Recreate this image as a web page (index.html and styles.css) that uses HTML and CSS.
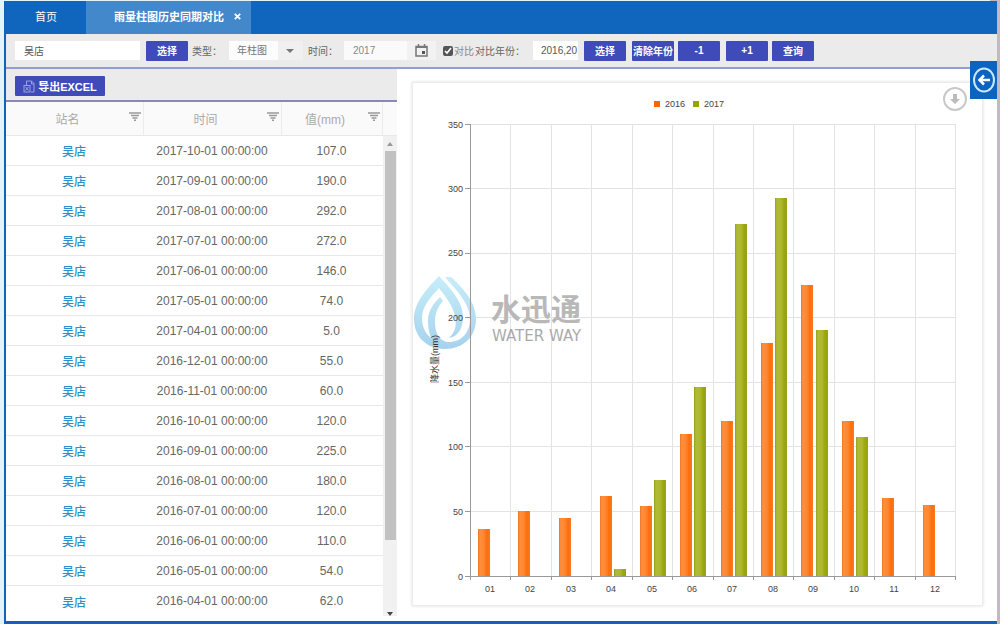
FILE: index.html
```html
<!DOCTYPE html>
<html lang="zh-CN">
<head>
<meta charset="utf-8">
<title>雨量柱图历史同期对比</title>
<link rel="stylesheet" href="styles.css">
</head>
<body>
<div class="app">
  <nav class="tabs">
    <a class="tab" href="#home">首页</a>
    <div class="tab tab-active"><a href="#rain">雨量柱图历史同期对比</a><button class="tab-close" aria-label="关闭"><svg width="7" height="7" viewBox="0 0 7 7"><path d="M.8.8l5.4 5.4M6.2.8L.8 6.2" stroke="#fff" stroke-width="1.8"/></svg></button></div>
  </nav>
  <form class="toolbar">
    <input class="field station" type="text" value="吴店" aria-label="站名">
    <button class="btn" type="button">选择</button>
    <label class="lbl lbl-type" for="type">类型：</label>
    <span class="select-wrap"><select class="type" id="type"><option>年柱图</option></select><svg class="caret" width="8" height="4" viewBox="0 0 8 4"><path d="M0 0h8L4 4z" fill="#777"/></svg></span>
    <label class="lbl lbl-time" for="time">时间：</label>
    <span class="date"><input class="field date-input" id="time" type="text" value="2017"><button class="date-btn" type="button" aria-label="选择日期"><svg width="13" height="13" viewBox="0 0 13 13"><path d="M1 2.500h11v9.500H1zM1 3.300h11M3.500 0v3M9.500 0v3" fill="none" stroke="#777" stroke-width="1.500"/><path d="M7 7h3v3H7z" fill="#555"/></svg></button></span>
    <label class="check"><input type="checkbox" checked>对比</label>
    <label class="lbl lbl-years" for="years">对比年份：</label>
    <input class="field years" id="years" type="text" value="2016,2017">
    <button class="btn" type="button">选择</button>
    <button class="btn" type="button">清除年份</button>
    <button class="btn btn-near" type="button">-1</button>
    <button class="btn" type="button">+1</button>
    <button class="btn btn-near" type="button">查询</button>
  </form>
  <main class="main">
    <section class="list">
      <div class="list-tools"><button class="btn export"><svg width="12" height="13" viewBox="0 0 12 13" fill="none" stroke="#9aa3df"><path d="M3.500 5V1h5L11 3.500V12H8M8.500 1v3H11"/><rect x="1" y="5.500" width="6" height="6.500"/><path d="M2.500 7l3 3.500M5.500 7l-3 3.500"/></svg>导出EXCEL</button></div>
      <div class="list-body">
        <table class="grid">
          <colgroup><col class="c-name"><col class="c-time"><col class="c-val"><col class="c-end"></colgroup>
          <thead><tr>
            <th><div class="head"><span>站名</span><svg class="filter" width="12" height="9" viewBox="0 0 12 9"><path d="M0 1h12M2 3.500h8M3.500 6h5M5 8.200h2" stroke="#999" stroke-width="1.500"/></svg></div></th>
            <th><div class="head"><span>时间</span><svg class="filter" width="12" height="9" viewBox="0 0 12 9"><path d="M0 1h12M2 3.500h8M3.500 6h5M5 8.200h2" stroke="#999" stroke-width="1.500"/></svg></div></th>
            <th><div class="head"><span>值(mm)</span><svg class="filter" width="12" height="9" viewBox="0 0 12 9"><path d="M0 1h12M2 3.500h8M3.500 6h5M5 8.200h2" stroke="#999" stroke-width="1.500"/></svg></div></th>
            <th></th>
          </tr></thead>
          <tbody>
            <tr><td><a href="#s">吴店</a></td><td>2017-10-01 00:00:00</td><td>107.0</td>
              <td class="scroll-cell" rowspan="16"><div class="scroll"><svg width="6" height="4" viewBox="0 0 6 4"><path d="M0 4h6L3 0z" fill="#999"/></svg><div class="thumb"></div><svg width="6" height="4" viewBox="0 0 6 4"><path d="M0 0h6L3 4z" fill="#444"/></svg></div></td></tr>
            <tr><td><a href="#s">吴店</a></td><td>2017-09-01 00:00:00</td><td>190.0</td></tr>
            <tr><td><a href="#s">吴店</a></td><td>2017-08-01 00:00:00</td><td>292.0</td></tr>
            <tr><td><a href="#s">吴店</a></td><td>2017-07-01 00:00:00</td><td>272.0</td></tr>
            <tr><td><a href="#s">吴店</a></td><td>2017-06-01 00:00:00</td><td>146.0</td></tr>
            <tr><td><a href="#s">吴店</a></td><td>2017-05-01 00:00:00</td><td>74.0</td></tr>
            <tr><td><a href="#s">吴店</a></td><td>2017-04-01 00:00:00</td><td>5.0</td></tr>
            <tr><td><a href="#s">吴店</a></td><td>2016-12-01 00:00:00</td><td>55.0</td></tr>
            <tr><td><a href="#s">吴店</a></td><td>2016-11-01 00:00:00</td><td>60.0</td></tr>
            <tr><td><a href="#s">吴店</a></td><td>2016-10-01 00:00:00</td><td>120.0</td></tr>
            <tr><td><a href="#s">吴店</a></td><td>2016-09-01 00:00:00</td><td>225.0</td></tr>
            <tr><td><a href="#s">吴店</a></td><td>2016-08-01 00:00:00</td><td>180.0</td></tr>
            <tr><td><a href="#s">吴店</a></td><td>2016-07-01 00:00:00</td><td>120.0</td></tr>
            <tr><td><a href="#s">吴店</a></td><td>2016-06-01 00:00:00</td><td>110.0</td></tr>
            <tr><td><a href="#s">吴店</a></td><td>2016-05-01 00:00:00</td><td>54.0</td></tr>
            <tr><td><a href="#s">吴店</a></td><td>2016-04-01 00:00:00</td><td>62.0</td></tr>
          </tbody>
        </table>
      </div>
    </section>
    <section class="chart-panel">
      <div class="card">
        <svg class="chart" viewBox="413 83 569 522" role="img" aria-label="降水量 2016 与 2017 对比">
          <defs>
            <linearGradient id="o"><stop offset="0" stop-color="#f07420"/><stop offset=".15" stop-color="#ff8f3c"/><stop offset=".5" stop-color="#ff8630"/><stop offset=".75" stop-color="#ff6c0a"/><stop offset="1" stop-color="#f57a25"/></linearGradient>
            <linearGradient id="g"><stop offset="0" stop-color="#94a01a"/><stop offset=".15" stop-color="#b0ba34"/><stop offset=".5" stop-color="#b0b832"/><stop offset=".75" stop-color="#9aa80a"/><stop offset="1" stop-color="#97a01c"/></linearGradient>
            <linearGradient id="w" x2="0" y2="1"><stop offset="0" stop-color="#c6edf9"/><stop offset="1" stop-color="#a5d2ed"/></linearGradient>
          </defs>
          <path class="gridline" d="M470 124.500H956M470 188.500H956M470 253.500H956M470 317.500H956M470 382.500H956M470 446.500H956M470 511.500H956M510.500 124V576M551.500 124V576M591.500 124V576M632.500 124V576M672.500 124V576M713.500 124V576M753.500 124V576M793.500 124V576M834.500 124V576M874.500 124V576M915.500 124V576M955.500 124V576"/>
          <g fill="url(#w)">
            <path d="M439 276C451 289 463 302 463 317C463 328 458 337 449 338C455 332 457 326 455 316C453 306 446 297 439 288C431 297 422 306 422 318C422 329 427 337 438 343L445 349C427 349 414 337 414 319C414 302 427 289 439 276Z"/>
            <path d="M445 277H451C463 288 476 302 476 319C476 337 463 349 445 349C434 347 428 337 428 321C428 311 433 304 440 297L443 301C437 308 435 314 435 322C435 334 440 342 449 342C462 342 470 332 470 319C470 303 456 290 445 277Z"/>
          </g>
          <path class="axis" d="M470.500 124V576.500H956M465 124.500h5M465 188.500h5M465 253.500h5M465 317.500h5M465 382.500h5M465 446.500h5M465 511.500h5M465 576.500h5M470.500 576v4M510.500 576v4M551.500 576v4M591.500 576v4M632.500 576v4M672.500 576v4M713.500 576v4M753.500 576v4M793.500 576v4M834.500 576v4M874.500 576v4M915.500 576v4M955.500 576v4"/>
          <g fill="url(#o)">
            <rect x="478" y="529" width="12" height="47"/><rect x="518" y="511" width="12" height="65"/><rect x="559" y="518" width="12" height="58"/><rect x="600" y="496" width="12" height="80"/><rect x="640" y="506" width="12" height="70"/><rect x="680" y="434" width="12" height="142"/><rect x="721" y="421" width="12" height="155"/><rect x="761" y="343" width="12" height="233"/><rect x="801" y="285" width="12" height="291"/><rect x="842" y="421" width="12" height="155"/><rect x="882" y="498" width="12" height="78"/><rect x="923" y="505" width="12" height="71"/>
          </g>
          <g fill="url(#g)">
            <rect x="614" y="569" width="12" height="7"/><rect x="654" y="480" width="12" height="96"/><rect x="694" y="387" width="12" height="189"/><rect x="735" y="224" width="12" height="352"/><rect x="775" y="198" width="12" height="378"/><rect x="816" y="330" width="12" height="246"/><rect x="856" y="437" width="12" height="139"/>
          </g>
          <g class="tick end"><text x="463" y="128">350</text><text x="463" y="192">300</text><text x="463" y="256">250</text><text x="463" y="321">200</text><text x="463" y="386">150</text><text x="463" y="450">100</text><text x="463" y="515">50</text><text x="463" y="580">0</text></g>
          <g class="tick mid"><text x="490" y="592">01</text><text x="530" y="592">02</text><text x="571" y="592">03</text><text x="611" y="592">04</text><text x="652" y="592">05</text><text x="692" y="592">06</text><text x="732" y="592">07</text><text x="773" y="592">08</text><text x="813" y="592">09</text><text x="854" y="592">10</text><text x="894" y="592">11</text><text x="935" y="592">12</text></g>
          <rect x="654" y="101" width="6" height="6" fill="#ff6600"/><rect x="693" y="101" width="6" height="6" fill="#93a500"/>
          <g class="tick"><text x="665" y="107">2016</text><text x="704" y="107">2017</text></g>
          <text class="axis-title" transform="translate(438 383) rotate(-90)">降水量(mm)</text>
          <text class="mark-cn" x="491" y="320">水迅通</text>
          <text class="mark-en" x="492" y="341">WATER WAY</text>
        </svg>
        <button class="download" aria-label="下载"><svg width="24" height="24" viewBox="0 0 24 24"><circle cx="12" cy="12" r="11" fill="#fff" stroke="#c8c8c8" stroke-width="2"/><path d="M10 7h4v5h3l-5 5-5-5h3z" fill="#bbb"/></svg></button>
      </div>
      <button class="collapse" aria-label="收起"><svg width="24" height="26" viewBox="0 0 24 26" fill="none" stroke="#c9e9ff" stroke-width="2"><ellipse cx="12" cy="13" rx="10" ry="11.500"/><path d="M18 13H8M12 8.500L7.500 13l4.500 4.500" stroke="#fff" stroke-width="2.500"/></svg></button>
    </section>
  </main>
</div>
</body>
</html>
```
FILE: styles.css
```css
* { box-sizing: border-box; }
body {
  margin: 0;
  min-height: 100vh;
  display: flex;
  padding: 1px 3px 0 4px;
  background: linear-gradient(90deg, #e3f3fa 99%, #c3b8c4 99%);
  font-family: "Liberation Sans", "Noto Sans CJK SC", sans-serif;
  font-size: 12px;
  color: #666;
}
button, input, select { font-family: inherit; border: 0; padding: 0; margin: 0; }
button { background: none; cursor: pointer; }
a { color: inherit; text-decoration: none; }
svg { display: block; flex: none; }
.app {
  flex: 1;
  min-width: 0;
  display: flex;
  flex-direction: column;
  background: #fff;
  border-left: 2px solid #1262b9;
  border-bottom: 3px solid #1262b9;
}
.tabs { display: flex; height: 33px; background: #1065bd; color: #fff; font-size: 11px; }
.tab { display: flex; align-items: center; justify-content: center; width: 80px; padding-bottom: 3px; }
.tab-active { width: 165px; gap: 10px; padding-left: 18px; background: #4288cb; font-weight: bold; }
.tab-close { display: flex; }
.toolbar {
  display: flex;
  align-items: center;
  height: 35px;
  padding-left: 9px;
  background: #ebebeb;
  border-bottom: 2px solid #929dd2;
  font-size: 10px;
}
.field { height: 19px; background: #fff; color: #555; font-size: 10px; padding: 0 9px; }
.station { width: 125px; }
.btn {
  width: 42px;
  height: 20px;
  margin-left: 6px;
  background: #3f4bb9;
  border-radius: 1px;
  color: #fff;
  font-size: 10px;
  font-weight: bold;
  white-space: nowrap;
}
.btn-near { margin-left: 4px; }
.lbl { white-space: nowrap; }
.lbl-type { width: 37px; margin-left: 4px; }
.select-wrap { position: relative; width: 74px; }
.type {
  display: block;
  width: 100%;
  height: 19px;
  padding-left: 8px;
  appearance: none;
  background: linear-gradient(90deg, #fcfcfc 49px, #f0f0f0 49px);
  color: #777;
  font-size: 10px;
}
.caret { position: absolute; right: 9px; top: 8px; pointer-events: none; }
.lbl-time { width: 36px; margin-left: 5px; }
.date { display: flex; width: 92px; }
.date-input { width: 63px; background: #fafafa; color: #888; }
.date-btn { display: flex; flex: 1; align-items: center; justify-content: center; background: #f2f2f2; }
.check { display: flex; align-items: center; gap: 1px; margin-left: 7px; color: #888; }
.check input { width: 10px; height: 10px; accent-color: #555; }
.lbl-years { width: 58px; margin-left: 1px; }
.years { width: 45px; padding: 0 0 0 8px; }
.main { flex: 1; display: flex; min-height: 0; }
.list { width: 391px; display: flex; flex-direction: column; }
.list-tools { height: 33px; padding: 7px 9px; background: #ebebeb; border-bottom: 2px solid #8a85ba; }
.export { display: flex; align-items: center; justify-content: center; gap: 3px; width: 90px; margin: 0; font-size: 11px; }
.grid { width: 100%; table-layout: fixed; border-collapse: separate; border-spacing: 0; }
.c-name, .c-time { width: 138px; }
.c-val { width: 101px; }
th { height: 34px; padding: 0; background: #fafafa; border-right: 1px solid #ececec; border-bottom: 1px solid #e8e8e8; color: #aaa; font-weight: normal; }
th:last-child { border-right: 0; }
.head { display: flex; align-items: center; padding-right: 2px; }
.head span { flex: 1; }
.filter { align-self: flex-start; margin-top: 2px; }
td { height: 30px; padding: 0 2px 0 0; border-bottom: 1px solid #e8e8e8; text-align: center; }
tbody tr:last-child td { border-bottom: 0; }
td a { color: #2b90c8; font-weight: 500; }
.scroll-cell { height: 480px; padding: 0; background: #f1f1f1; border: 0; }
.scroll { display: flex; flex-direction: column; align-items: center; justify-content: space-between; height: 480px; padding: 6px 1px 0; }
.thumb { width: 11px; height: 389px; margin: 5px 0 auto; background: #c1c1c1; }
.chart-panel { position: relative; flex: 1; min-width: 0; display: flex; padding: 13px 14px 15px 15px; }
.card { position: relative; flex: 1; min-width: 0; border: 1px solid #ececec; box-shadow: 0 0 3px #ddd; }
.chart { width: 100%; height: 100%; }
.gridline { stroke: #e3e3e3; fill: none; }
.axis { stroke: #999; fill: none; }
.tick { font-size: 9px; fill: #444; }
.end { text-anchor: end; }
.mid { text-anchor: middle; }
.axis-title { font-size: 9px; fill: #333; }
.mark-cn { font-size: 30px; font-weight: bold; fill: #b8b8b8; }
.mark-en { font-family: "DejaVu Sans", sans-serif; font-size: 15px; fill: #aaa; }
.download { position: absolute; top: 4px; right: 15px; }
.collapse {
  position: absolute;
  top: -8px;
  right: 0;
  display: flex;
  align-items: center;
  justify-content: center;
  width: 27px;
  height: 38px;
  background: #0d63c0;
}
```
